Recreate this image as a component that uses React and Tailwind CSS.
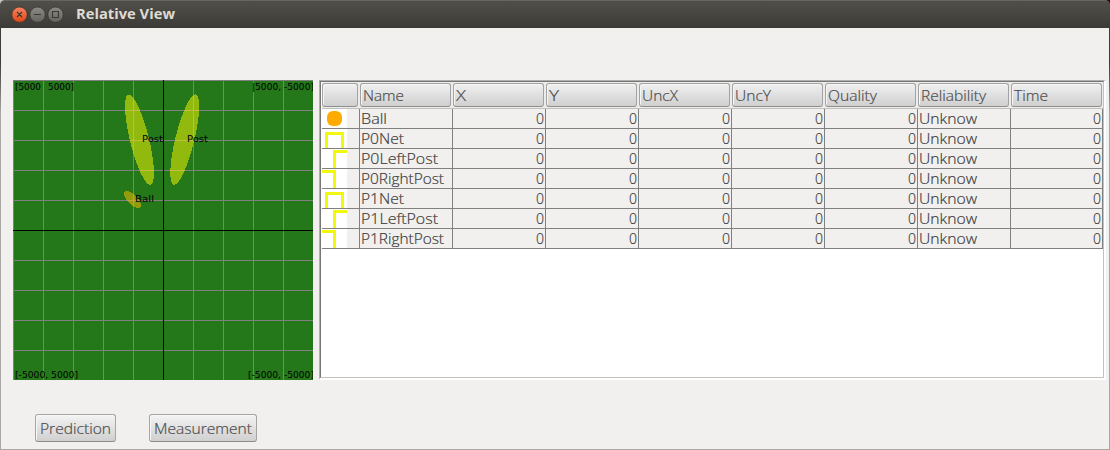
import React from "react";

const LINES = [0, 30, 60, 90, 120, 180, 210, 240, 270];

const HEADERS = [
  { label: "Name", width: 41 },
  { label: "X", width: 10 },
  { label: "Y", width: 10 },
  { label: "UncX", width: 36 },
  { label: "UncY", width: 36 },
  { label: "Quality", width: 49 },
  { label: "Reliability", width: 65 },
  { label: "Time", width: 34 },
];

const ROWS = [
  { name: "Ball", icon: "ball", width: 26 },
  { name: "P0Net", icon: "net", width: 43 },
  { name: "P0LeftPost", icon: "left", width: 77 },
  { name: "P0RightPost", icon: "right", width: 83 },
  { name: "P1Net", icon: "net", width: 43 },
  { name: "P1LeftPost", icon: "left", width: 77 },
  { name: "P1RightPost", icon: "right", width: 83 },
];

const COLUMNS = "grid grid-cols-[38px_93px_93px_93px_93px_93px_93px_93px_92px]";

function Label({ text, width }) {
  return (
    <svg width={width} height="20" className="block shrink-0 overflow-visible">
      <text
        x="0"
        y="15"
        textLength={width}
        lengthAdjust="spacingAndGlyphs"
        strokeWidth=".2"
        className="fill-current stroke-current font-['Open_Sans','Noto_Sans',sans-serif] text-[15px] font-light"
      >
        {text}
      </text>
    </svg>
  );
}

function RowIcon({ kind }) {
  return (
    <svg width="25" height="19" className="block bg-white" shapeRendering={kind === "ball" ? "auto" : "crispEdges"}>
      {kind === "ball" && <rect x="5" y="2" width="15" height="15" rx="6" fill="#ffaa00" />}
      {kind === "net" && <path d="M3 19V3h19v16h-3V6H6v13z" fill="#f2f80d" />}
      {kind === "left" && <path d="M11 19V1h14v3H14v15z" fill="#f2f80d" />}
      {kind === "right" && <path d="M0 1h14v18h-3V4H0z" fill="#f2f80d" />}
    </svg>
  );
}

function FieldText({ x, y, width, children }) {
  return (
    <text
      x={x}
      y={y}
      textLength={width}
      lengthAdjust="spacingAndGlyphs"
      className="fill-black font-['DejaVu_Sans',sans-serif] text-[9px]"
    >
      {children}
    </text>
  );
}

function Field() {
  return (
    <svg width="300" height="300" className="block shrink-0 bg-[#24781a]">
      <g shapeRendering="crispEdges">
        {LINES.map((p) => (
          <path key={p} d={`M${p} 0h1v300h-1zM0 ${p}h300v1H0z`} fill="#808080" />
        ))}
        <path d="M150 0h1v300h-1zM0 150h300v1H0z" fill="#000" />
        <ellipse cx="126.5" cy="59.7" rx="9.5" ry="46.5" transform="rotate(-13.8 126.5 59.7)" fill="#fffa00" fillOpacity=".5" />
        <ellipse cx="171.7" cy="59.7" rx="9.5" ry="46.5" transform="rotate(13.8 171.7 59.7)" fill="#fffa00" fillOpacity=".5" />
        <ellipse cx="119.5" cy="119.5" rx="4.6" ry="11.1" transform="rotate(-45 119.5 119.5)" fill="#ffc000" fillOpacity=".5" />
      </g>
      <FieldText x="2" y="10" width="26">[5000</FieldText>
      <FieldText x="35" y="10" width="26">5000]</FieldText>
      <FieldText x="239" y="10" width="62">|5000, -5000]</FieldText>
      <FieldText x="2" y="298" width="63">[-5000, 5000]</FieldText>
      <FieldText x="235" y="298" width="66">[-5000, -5000]</FieldText>
      <FieldText x="129" y="62" width="21">Post</FieldText>
      <FieldText x="174" y="62" width="21">Post</FieldText>
      <FieldText x="122" y="122" width="19">Ball</FieldText>
    </svg>
  );
}

function HeaderCell({ label, width, last }) {
  return (
    <div className={last ? "pr-px" : "pr-[2px]"}>
      <div className="flex h-6 items-center rounded-[3px] border border-[#a3a3a3] border-b-[#8e8e8e] bg-linear-to-b from-[#f0f0f0] to-[#d0d0d0] pt-[2px] pl-[2px] text-[#4c4c4c] shadow-[inset_1px_1px_0_#f6f6f6]">
        {label && <Label text={label} width={width} />}
      </div>
    </div>
  );
}

function Table() {
  return (
    <div className="h-[300px] w-[787px] border-t border-l border-r-2 border-b-2 border-t-[#b0aeab] border-l-[#b0aeab] border-r-white border-b-white">
      <div className="h-full border border-t-[#777] border-l-[#777] border-r-[#c1c1c1] border-b-[#c1c1c1] bg-white pl-px">
        <div className="h-[27px] border-b border-[#c1c0be] bg-[#edecea] pt-px">
          <div className={COLUMNS}>
            <HeaderCell />
            {HEADERS.map((h, i) => (
              <HeaderCell key={h.label} label={h.label} width={h.width} last={i === 7} />
            ))}
          </div>
        </div>
        {ROWS.map((row) => (
          <div key={row.name} className={`${COLUMNS} h-5 w-[781px] bg-[#f1f0ee] text-[#3c3c3c]`}>
            <div className="border-r border-b border-[#808080]">
              <RowIcon kind={row.icon} />
            </div>
            <div className="h-5 border-r border-b border-[#808080] pl-px">
              <Label text={row.name} width={row.width} />
            </div>
            {HEADERS.slice(1).map((h) => (
              <div
                key={h.label}
                className={`flex h-5 border-r border-b border-[#808080] ${h.label === "Reliability" ? "pl-px" : "justify-end pr-px"}`}
              >
                {h.label === "Reliability" ? <Label text="Unknow" width={58} /> : <Label text="0" width={8} />}
              </div>
            ))}
          </div>
        ))}
      </div>
    </div>
  );
}

function PushButton({ text, width }) {
  return (
    <button className="flex h-7 items-center rounded-[3px] border border-[#a5a5a5] border-b-[#8c8c8c] bg-linear-to-b from-[#f3f3f3] to-[#d0d0d0] px-1 pt-px text-[#4c4c4c] shadow-[inset_1px_1px_0_#f8f8f8]">
      <Label text={text} width={width} />
    </button>
  );
}

function TitleBar() {
  return (
    <header className="flex h-7 items-center rounded-t-[5px] border-t border-[#66655f] bg-linear-to-b from-[#504f49] to-[#3c3b37] pl-[11px]">
      <svg width="53" height="18" className="block">
        <defs>
          <linearGradient id="close" x1="0" y1="0" x2="0" y2="1">
            <stop offset="0" stopColor="#f58462" />
            <stop offset="1" stopColor="#dd4814" />
          </linearGradient>
          <linearGradient id="plain" x1="0" y1="0" x2="0" y2="1">
            <stop offset="0" stopColor="#8d8b84" />
            <stop offset="1" stopColor="#64635d" />
          </linearGradient>
        </defs>
        <g stroke="#33322e" strokeWidth=".7">
          <circle cx="8.5" cy="8.7" r="7.7" fill="url(#close)" />
          <circle cx="26.5" cy="8.7" r="7.7" fill="url(#plain)" />
          <circle cx="44.5" cy="8.7" r="7.7" fill="url(#plain)" />
        </g>
        <g fill="none" stroke="#393832" strokeWidth="1.1">
          <path d="M6 6l5 5M11 6l-5 5M23 8.5h7M41.5 5.5h6v6h-6z" />
        </g>
      </svg>
      <svg width="110" height="20" className="ml-3 block">
        <text x="0" y="14" textLength="99" lengthAdjust="spacingAndGlyphs" className="fill-[#dfdbd2] font-['Open_Sans','Noto_Sans',sans-serif] text-[14px] font-bold">
          Relative View
        </text>
      </svg>
    </header>
  );
}

export default function App() {
  return (
    <div className="flex h-[450px] w-[1110px] flex-col bg-linear-to-r from-[#c8cbc0] to-[#2c001e]">
      <TitleBar />
      <div className="min-h-0 flex-1 bg-linear-to-b from-[#3c3b37] from-8% to-[#a9a7a3] to-20% px-px pb-px">
        <main className="h-full bg-[#f1f0ee] pt-[52px] pl-3">
          <div className="flex gap-[6px]">
            <Field />
            <Table />
          </div>
          <div className="mt-[34px] ml-[22px] flex gap-[33px]">
            <PushButton text="Prediction" width={71} />
            <PushButton text="Measurement" width={98} />
          </div>
        </main>
      </div>
    </div>
  );
}
